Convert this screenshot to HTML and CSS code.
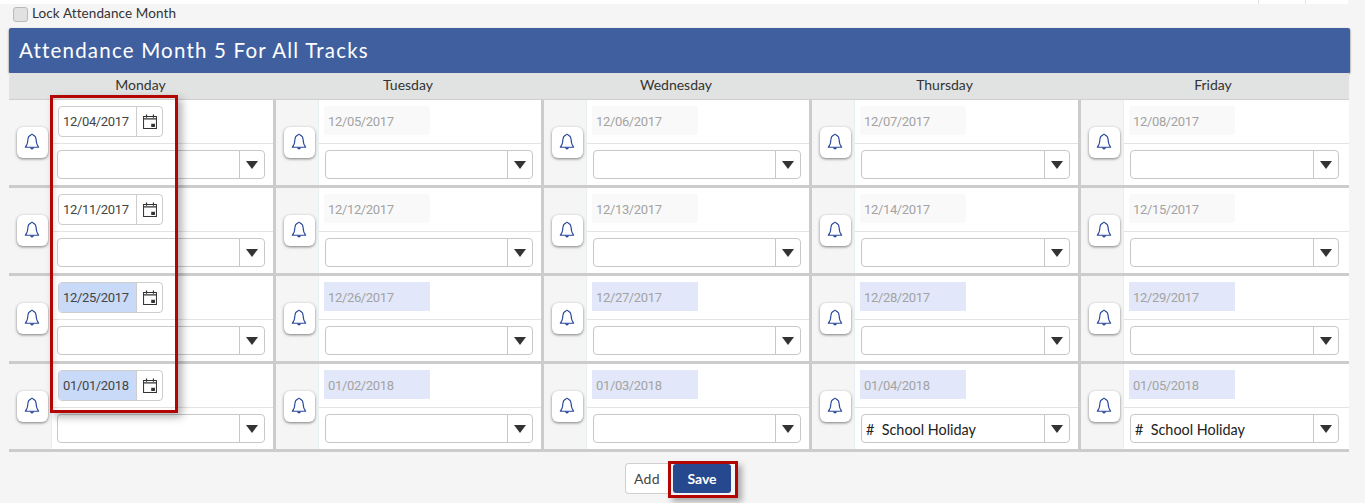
FILE: index.html
```html
<!DOCTYPE html>
<html lang="en">
<head>
<meta charset="utf-8">
<title>Attendance Month</title>
<link rel="stylesheet" href="styles.css">
</head>
<body>
<svg class="defs" width="0" height="0" aria-hidden="true">
  <symbol id="bell" viewBox="0 0 16 18"><path d="M8 1.200c.7 0 1.100.4 1.200 1 2 .5 2.800 2.100 2.900 4.200.1 3.300.7 5.800 2.600 7.800H1.300c1.900-2 2.500-4.500 2.600-7.800C4 4.300 4.800 2.700 6.800 2.200c.1-.6.500-1 1.200-1z" fill="none" stroke="#2b4a9b" stroke-width="1.100" stroke-linejoin="round"/><path d="M6.200 14.600h3.600c0 1.300-.8 2-1.800 2s-1.800-.7-1.800-2z" fill="#2b4a9b"/></symbol>
  <symbol id="cal" viewBox="0 0 15 16"><path d="M.6 2.600h13.800v12.800H.6z" fill="none" stroke="#333" stroke-width="1.100"/><path d="M.6 5.200h13.800" stroke="#333" stroke-width="1.200"/><path d="M3.800.4v3.600M11.200.4v3.600" stroke="#333" stroke-width="1.300"/><path d="M8.800 10.400h4v3.600h-4z" fill="#333"/></symbol>
</svg>
<div class="topstrip"><span class="topcell"></span><span class="topcell narrow"></span></div>
<label class="lock"><span class="checkbox"></span>Lock Attendance Month</label>
<main class="panel">
  <h1 class="title">Attendance Month 5 For All Tracks</h1>
  <div class="calendar">
    <div class="day">Monday</div><div class="day">Tuesday</div><div class="day">Wednesday</div><div class="day">Thursday</div><div class="day">Friday</div>

    <div class="cell"><div class="bellcol"><button class="bell"><svg><use href="#bell"/></svg></button></div><div class="fields"><div class="daterow first"><div class="datebox"><span class="dateval">12/04/2017</span><span class="calbtn"><svg><use href="#cal"/></svg></span></div></div><div class="selrow first"><div class="select"><span class="selval"></span><span class="arrow"></span></div></div></div></div>
    <div class="cell"><div class="bellcol"><button class="bell"><svg><use href="#bell"/></svg></button></div><div class="fields"><div class="daterow"><div class="readonly">12/05/2017</div></div><div class="selrow"><div class="select"><span class="selval"></span><span class="arrow"></span></div></div></div></div>
    <div class="cell"><div class="bellcol"><button class="bell"><svg><use href="#bell"/></svg></button></div><div class="fields"><div class="daterow"><div class="readonly">12/06/2017</div></div><div class="selrow"><div class="select"><span class="selval"></span><span class="arrow"></span></div></div></div></div>
    <div class="cell"><div class="bellcol"><button class="bell"><svg><use href="#bell"/></svg></button></div><div class="fields"><div class="daterow"><div class="readonly">12/07/2017</div></div><div class="selrow"><div class="select"><span class="selval"></span><span class="arrow"></span></div></div></div></div>
    <div class="cell"><div class="bellcol"><button class="bell"><svg><use href="#bell"/></svg></button></div><div class="fields"><div class="daterow"><div class="readonly">12/08/2017</div></div><div class="selrow"><div class="select"><span class="selval"></span><span class="arrow"></span></div></div></div></div>

    <div class="cell"><div class="bellcol"><button class="bell"><svg><use href="#bell"/></svg></button></div><div class="fields"><div class="daterow first"><div class="datebox"><span class="dateval">12/11/2017</span><span class="calbtn"><svg><use href="#cal"/></svg></span></div></div><div class="selrow first"><div class="select"><span class="selval"></span><span class="arrow"></span></div></div></div></div>
    <div class="cell"><div class="bellcol"><button class="bell"><svg><use href="#bell"/></svg></button></div><div class="fields"><div class="daterow"><div class="readonly">12/12/2017</div></div><div class="selrow"><div class="select"><span class="selval"></span><span class="arrow"></span></div></div></div></div>
    <div class="cell"><div class="bellcol"><button class="bell"><svg><use href="#bell"/></svg></button></div><div class="fields"><div class="daterow"><div class="readonly">12/13/2017</div></div><div class="selrow"><div class="select"><span class="selval"></span><span class="arrow"></span></div></div></div></div>
    <div class="cell"><div class="bellcol"><button class="bell"><svg><use href="#bell"/></svg></button></div><div class="fields"><div class="daterow"><div class="readonly">12/14/2017</div></div><div class="selrow"><div class="select"><span class="selval"></span><span class="arrow"></span></div></div></div></div>
    <div class="cell"><div class="bellcol"><button class="bell"><svg><use href="#bell"/></svg></button></div><div class="fields"><div class="daterow"><div class="readonly">12/15/2017</div></div><div class="selrow"><div class="select"><span class="selval"></span><span class="arrow"></span></div></div></div></div>

    <div class="cell"><div class="bellcol"><button class="bell"><svg><use href="#bell"/></svg></button></div><div class="fields"><div class="daterow first"><div class="datebox"><span class="dateval holiday">12/25/2017</span><span class="calbtn"><svg><use href="#cal"/></svg></span></div></div><div class="selrow first"><div class="select"><span class="selval"></span><span class="arrow"></span></div></div></div></div>
    <div class="cell"><div class="bellcol"><button class="bell"><svg><use href="#bell"/></svg></button></div><div class="fields"><div class="daterow"><div class="readonly holiday">12/26/2017</div></div><div class="selrow"><div class="select"><span class="selval"></span><span class="arrow"></span></div></div></div></div>
    <div class="cell"><div class="bellcol"><button class="bell"><svg><use href="#bell"/></svg></button></div><div class="fields"><div class="daterow"><div class="readonly holiday">12/27/2017</div></div><div class="selrow"><div class="select"><span class="selval"></span><span class="arrow"></span></div></div></div></div>
    <div class="cell"><div class="bellcol"><button class="bell"><svg><use href="#bell"/></svg></button></div><div class="fields"><div class="daterow"><div class="readonly holiday">12/28/2017</div></div><div class="selrow"><div class="select"><span class="selval"></span><span class="arrow"></span></div></div></div></div>
    <div class="cell"><div class="bellcol"><button class="bell"><svg><use href="#bell"/></svg></button></div><div class="fields"><div class="daterow"><div class="readonly holiday">12/29/2017</div></div><div class="selrow"><div class="select"><span class="selval"></span><span class="arrow"></span></div></div></div></div>

    <div class="cell"><div class="bellcol"><button class="bell"><svg><use href="#bell"/></svg></button></div><div class="fields"><div class="daterow first"><div class="datebox"><span class="dateval holiday">01/01/2018</span><span class="calbtn"><svg><use href="#cal"/></svg></span></div></div><div class="selrow first"><div class="select"><span class="selval"></span><span class="arrow"></span></div></div></div></div>
    <div class="cell"><div class="bellcol"><button class="bell"><svg><use href="#bell"/></svg></button></div><div class="fields"><div class="daterow"><div class="readonly holiday">01/02/2018</div></div><div class="selrow"><div class="select"><span class="selval"></span><span class="arrow"></span></div></div></div></div>
    <div class="cell"><div class="bellcol"><button class="bell"><svg><use href="#bell"/></svg></button></div><div class="fields"><div class="daterow"><div class="readonly holiday">01/03/2018</div></div><div class="selrow"><div class="select"><span class="selval"></span><span class="arrow"></span></div></div></div></div>
    <div class="cell"><div class="bellcol"><button class="bell"><svg><use href="#bell"/></svg></button></div><div class="fields"><div class="daterow"><div class="readonly holiday">01/04/2018</div></div><div class="selrow"><div class="select"><span class="selval"># &nbsp;School Holiday</span><span class="arrow"></span></div></div></div></div>
    <div class="cell"><div class="bellcol"><button class="bell"><svg><use href="#bell"/></svg></button></div><div class="fields"><div class="daterow"><div class="readonly holiday">01/05/2018</div></div><div class="selrow"><div class="select"><span class="selval"># &nbsp;School Holiday</span><span class="arrow"></span></div></div></div></div>

    <div class="callout"></div>
  </div>
  <div class="actions">
    <button class="btn-add">Add</button>
    <div class="save-frame"><button class="btn-save">Save</button></div>
  </div>
</main>
</body>
</html>
```

FILE: styles.css
```css
* { box-sizing: border-box; }
html, body { margin: 0; padding: 0; }
body {
  background: #f5f5f5;
  color: #333;
  font-family: Lato, "Open Sans", sans-serif;
  height: 503px;
  overflow: hidden;
}
.defs { position: absolute; }
.topstrip {
  height: 4px;
  width: 1348px;
  background: #fff;
  display: flex;
  justify-content: flex-end;
}
.topcell {
  width: 47px;
  border-left: 1px solid #e2e2e2;
  height: 4px;
}
.topcell.narrow { width: 43px; }
.lock {
  display: flex;
  align-items: flex-start;
  height: 20px;
  padding-left: 13px;
  padding-top: 1px;
  line-height: 16px;
  font-size: 13.5px;
  color: #333;
  letter-spacing: 0.1px;
}
.checkbox {
  width: 15px;
  height: 15px;
  margin: 2px 4px 0 0;
  background: #e1e1e1;
  border: 1px solid #b9b9b9;
  border-radius: 3px;
}
.panel { margin: 4px 0 0 9px; width: 1340px; }
.title {
  margin: 0;
  width: 1341px;
  height: 45px;
  padding-left: 10px;
  line-height: 45px;
  background: #405f9f;
  color: #fff;
  font-size: 20.5px;
  font-weight: 400;
  letter-spacing: 1.2px;
  border-radius: 2px;
  box-shadow: 0 1px 2px rgba(0, 0, 0, .7);
}
.calendar {
  position: relative;
  display: grid;
  grid-template-columns: 267px 268px 268px 269px 268px;
  grid-auto-rows: 88px;
  grid-template-rows: 27px;
}
.day {
  background: #e1e3e2;
  border-bottom: 1px solid #cfcfcf;
  text-align: center;
  font-size: 14px;
  line-height: 24px;
  padding-right: 4px;
}
.cell {
  display: flex;
  border-right: 3px solid #ccc;
  border-bottom: 3px solid #ccc;
}
.cell:nth-child(5n) { border-right: 0; }
.bellcol {
  width: 43px;
  flex: none;
  background: #f5f5f5;
  border-right: 1px solid #e8eff3;
  display: flex;
  align-items: center;
  justify-content: center;
  padding-left: 4px;
}
.bell {
  width: 31px;
  height: 31px;
  margin-top: -1px;
  padding: 0;
  background: #fff;
  border: 0;
  border-radius: 6px;
  box-shadow: 0 1px 3px rgba(0, 0, 0, .5);
  display: flex;
  align-items: center;
  justify-content: center;
}
.bell svg { width: 16px; height: 18px; }
.fields { flex: 1; background: #fff; min-width: 0; }
.daterow {
  height: 44px;
  padding: 6px 0 0 5px;
  border-bottom: 1px solid #e3e3e3;
}
.daterow.first { padding-left: 6px; }
.readonly {
  width: 106px;
  height: 29px;
  padding-left: 4px;
  line-height: 31px;
  background: #f9f9f9;
  color: #a3a3a3;
  font-family: Roboto, sans-serif;
  font-size: 13px;
  letter-spacing: -0.35px;
  border-radius: 3px;
}
.readonly.holiday { background: #e2e8f9; border-radius: 0; }
.datebox {
  width: 105px;
  height: 31px;
  display: flex;
  background: #fff;
  border: 1px solid #cdcdcd;
  border-radius: 4px;
  overflow: hidden;
}
.dateval {
  width: 77px;
  padding-left: 4px;
  line-height: 30px;
  font-family: Roboto, sans-serif;
  font-size: 13px;
  letter-spacing: -0.35px;
  color: #444;
}
.dateval.holiday { background: #c9daf9; }
.calbtn {
  flex: 1;
  border-left: 1px solid #cdcdcd;
  display: flex;
  align-items: center;
  justify-content: center;
}
.calbtn svg { width: 14px; height: 15px; }
.selrow { padding: 6px 0 0 6px; }
.selrow.first { padding-left: 5px; }
.select {
  width: 208px;
  height: 29px;
  display: flex;
  background: #fff;
  border: 1px solid #c8c8c8;
  border-radius: 4px;
}
.cell:nth-child(5n) .select, .cell:nth-child(5n+4) .select { width: 209px; }
.selval {
  flex: 1;
  padding-left: 4px;
  line-height: 30px;
  font-size: 14.4px;
  color: #222;
  white-space: nowrap;
}
.arrow {
  width: 25px;
  border-left: 1px solid #c8c8c8;
  display: flex;
  align-items: center;
  justify-content: center;
}
.arrow::before {
  content: "";
  border-left: 6px solid transparent;
  border-right: 6px solid transparent;
  border-top: 8px solid #333;
}
.callout {
  position: absolute;
  left: 41px;
  top: 22px;
  width: 128px;
  height: 318px;
  border: 3px solid #b40505;
  box-shadow: 4px 4px 8px rgba(0, 0, 0, .3), inset 4px 0 6px -3px rgba(0, 0, 0, .12);
  pointer-events: none;
}
.actions {
  display: flex;
  justify-content: center;
  align-items: flex-start;
  padding-left: 5px;
  margin-top: 9px;
}
.btn-add {
  width: 43px;
  height: 31px;
  margin-top: 2px;
  background: #fff;
  border: 1px solid #d0d0d0;
  border-right: 0;
  border-radius: 4px 0 0 4px;
  padding: 0;
  font: 14px Lato, sans-serif;
  letter-spacing: .4px;
  color: #444;
}
.save-frame {
  width: 70px;
  height: 37px;
  padding: 0 4px 0 2px;
  border: 3px solid #b40505;
  box-shadow: 4px 4px 6px rgba(0, 0, 0, .3);
  display: flex;
}
.btn-save {
  width: 58px;
  height: 29px;
  margin-top: 0;
  background: #26488f;
  color: #fff;
  border: 0;
  border-radius: 3px;
  padding: 0;
  font: 700 14px Lato, sans-serif;
}
```
